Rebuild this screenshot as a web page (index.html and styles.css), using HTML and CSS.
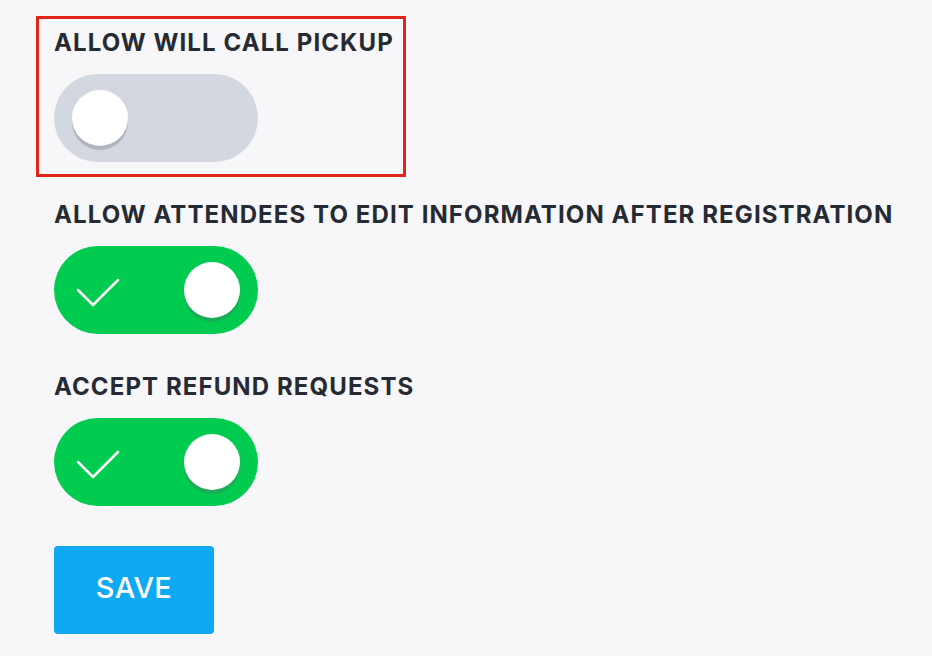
FILE: index.html
```html
<!DOCTYPE html>
<html lang="en">
<head>
    <meta charset="UTF-8">
    <meta name="viewport" content="width=device-width, initial-scale=1.0">
    <title>Registration Settings</title>
    <link rel="stylesheet" href="styles.css">
</head>
<body>
    <div class="settings">
        <div class="field highlighted">
            <label class="field-label">Allow will call pickup</label>
            <div class="toggle">
                <span class="knob"></span>
            </div>
        </div>

        <div class="field">
            <label class="field-label">Allow attendees to edit information after registration</label>
            <div class="toggle on">
                <svg class="check" width="80" height="88" viewBox="0 0 80 88">
                    <polyline points="24,44 39,59 64,34" fill="none" stroke="#fff" stroke-width="2.5" stroke-linecap="round" stroke-linejoin="round"/>
                </svg>
                <span class="knob"></span>
            </div>
        </div>

        <div class="field">
            <label class="field-label">Accept refund requests</label>
            <div class="toggle on">
                <svg class="check" width="80" height="88" viewBox="0 0 80 88">
                    <polyline points="24,44 39,59 64,34" fill="none" stroke="#fff" stroke-width="2.5" stroke-linecap="round" stroke-linejoin="round"/>
                </svg>
                <span class="knob"></span>
            </div>
        </div>

        <button class="save-btn">Save</button>
    </div>
</body>
</html>
```

FILE: styles.css
```css
body {
    margin: 0;
    background: #f7f7f9;
    font-family: Inter, 'Liberation Sans', sans-serif;
    color: #262a33;
}

.settings {
    display: flex;
    flex-direction: column;
    align-items: flex-start;
    padding: 16px 0 0 54px;
}

.field {
    display: flex;
    flex-direction: column;
    align-items: flex-start;
    margin-bottom: 40px;
}

.field.highlighted {
    margin-left: -18px;
    margin-bottom: 25px;
    padding: 11px 9px 12px 15px;
    border: 3px solid #e0251b;
}

.field-label {
    font-size: 24px;
    line-height: 26px;
    font-weight: 700;
    text-transform: uppercase;
    letter-spacing: 1.1px;
    margin-bottom: 18px;
}

.toggle {
    display: flex;
    align-items: center;
    width: 204px;
    height: 88px;
    border-radius: 44px;
    background: #d3d7df;
    padding: 0 18px;
    box-sizing: border-box;
}

.toggle.on {
    background: #02cc50;
    justify-content: space-between;
    padding-left: 0;
}

.knob {
    width: 56px;
    height: 56px;
    border-radius: 50%;
    background: #fff;
    box-shadow: 0 4px 1px rgba(90, 95, 110, 0.3);
}

.save-btn {
    width: 160px;
    height: 88px;
    border: none;
    border-radius: 4px;
    background: #0da9f2;
    color: #fff;
    font-family: Inter, sans-serif;
    font-size: 29px;
    font-weight: 500;
    letter-spacing: 0.3px;
    text-transform: uppercase;
    padding-bottom: 6px;
    cursor: pointer;
}
```
